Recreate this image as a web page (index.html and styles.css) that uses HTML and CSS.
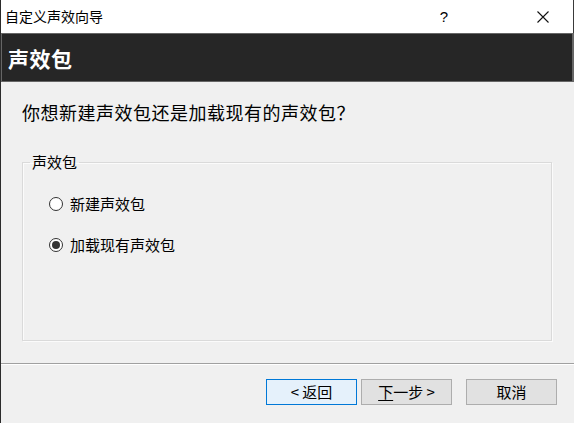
FILE: index.html
```html
<!DOCTYPE html>
<html lang="zh-CN">
<head>
<meta charset="utf-8">
<title>自定义声效向导</title>
<link rel="stylesheet" href="styles.css">
</head>
<body>
<div class="window">
  <div class="titlebar">
    <span class="title">自定义声效向导</span>
    <span class="cap-btn help">?</span>
    <span class="cap-btn close">
      <svg width="12" height="12" viewBox="0 0 12 12"><path d="M0.5 0.5 L11.5 11.5 M11.5 0.5 L0.5 11.5" stroke="#111" stroke-width="1.1" fill="none"/></svg>
    </span>
  </div>
  <div class="header">声效包</div>
  <div class="content">
    <p class="question">你想新建声效包还是加载现有的声效包？</p>
    <fieldset class="group">
      <legend class="legend">声效包</legend>
      <label class="radio-row"><span class="radio"></span><span>新建声效包</span></label>
      <label class="radio-row"><span class="radio checked"></span><span>加载现有声效包</span></label>
    </fieldset>
  </div>
  <div class="footer">
    <button class="btn default">&lt; 返回</button>
    <button class="btn"><u>下</u>一步 &gt;</button>
    <button class="btn cancel">取消</button>
  </div>
</div>
</body>
</html>
```
FILE: styles.css
```css
html, body {
  margin: 0;
  padding: 0;
}
body {
  width: 574px;
  height: 423px;
  overflow: hidden;
  font-family: "Noto Sans CJK SC", "Noto Sans", sans-serif;
  color: #000;
}
.window {
  box-sizing: border-box;
  width: 574px;
  height: 423px;
  display: flex;
  flex-direction: column;
  border-left: 1px solid #2b2b2b;
  background: #f0f0f0;
}
.titlebar {
  box-sizing: border-box;
  height: 33px;
  background: #fff;
  display: flex;
  align-items: center;
  padding-left: 4px;
  border-right: 1px solid #3a3a3a;
}
.title {
  font-size: 14px;
  flex: 1;
  line-height: 33px;
}
.cap-btn {
  width: 46px;
  height: 33px;
  display: flex;
  align-items: center;
  justify-content: center;
}
.help {
  font-family: "Liberation Sans", sans-serif;
  font-size: 15px;
  margin-right: 53px;
}
.close {
  margin-right: 7px;
}
.header {
  box-sizing: border-box;
  height: 49px;
  background: #262626;
  border: 1px solid #666;
  border-right: 2px solid #666;
  color: #fff;
  font-weight: bold;
  font-size: 21px;
  display: flex;
  align-items: center;
  padding-left: 6px;
  letter-spacing: 0.5px;
}
.content {
  flex: 1;
  padding: 0 22px 0 21px;
}
.question {
  margin: 19px 0 0 0;
  font-size: 18px;
  line-height: 22px;
  letter-spacing: 0.5px;
}
.group {
  box-sizing: border-box;
  margin: 29px 0 0 0;
  height: 189px;
  border: 1px solid #dadada;
  box-shadow: inset 1px 1px 0 #fbfbfb, 1px 1px 0 #fbfbfb;
  padding: 21px 0 0 0;
  display: flex;
  flex-direction: column;
  gap: 19px;
}
.legend {
  font-size: 15px;
  line-height: 20px;
  padding: 0 2px;
  margin-left: 7px;
}
.radio-row {
  display: flex;
  align-items: center;
  font-size: 15px;
  line-height: 22px;
  gap: 7px;
  margin-left: 26px;
}
.radio {
  flex-shrink: 0;
  box-sizing: border-box;
  width: 14px;
  height: 14px;
  border-radius: 50%;
  border: 1px solid #333;
  background: #fff;
  display: flex;
  align-items: center;
  justify-content: center;
}
.radio.checked::after {
  content: "";
  width: 8px;
  height: 8px;
  border-radius: 50%;
  background: #333;
}
.footer {
  box-sizing: border-box;
  height: 60px;
  border-top: 1px solid #a0a0a0;
  box-shadow: inset 0 1px 0 #fff;
  display: flex;
  justify-content: flex-end;
  align-items: flex-start;
  padding: 15px 17px 0 0;
}
.btn {
  box-sizing: border-box;
  width: 91px;
  height: 26px;
  border: 1px solid #adadad;
  background: #e1e1e1;
  font-family: "Noto Sans CJK SC", "Noto Sans", sans-serif;
  font-size: 15px;
  line-height: 22px;
  color: #000;
  padding: 0;
  margin-left: 4px;
}
.btn.default {
  border: 1px solid #0078d7;
  background: #e5f1fb;
}
.btn.cancel {
  margin-left: 14px;
}
.btn u {
  text-underline-offset: 2px;
}
```
